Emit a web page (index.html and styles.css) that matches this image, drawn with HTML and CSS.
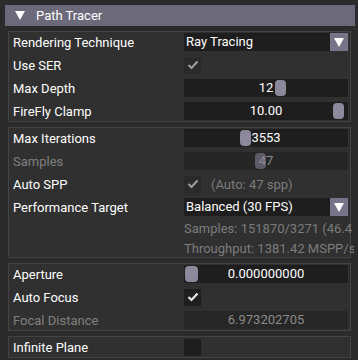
FILE: index.html
```html
<!DOCTYPE html>
<html>
<head>
<meta charset="utf-8">
<title>Path Tracer</title>
<link rel="stylesheet" href="styles.css">
</head>
<body>
<div class="panel">
    <div class="header">
        <svg class="header-arrow" width="10" height="9" viewBox="0 0 10 9"><polygon points="0,0 10,0 5,9" fill="#fff"/></svg>
        <span>Path Tracer</span>
    </div>

    <!-- 渲染设置 -->
    <div class="group">
        <div class="row">
            <span class="label">Rendering Technique</span>
            <div class="combo">
                <span class="combo-text">Ray Tracing</span>
                <span class="combo-btn"><svg width="10" height="9" viewBox="0 0 10 9"><polygon points="0,0 10,0 5,9" fill="#fff"/></svg></span>
            </div>
        </div>
        <div class="row">
            <span class="label">Use SER</span>
            <div class="ctrl"><span class="check check-soft"><svg width="12" height="10" viewBox="0 0 12 10"><polyline points="1.5,5 4.5,8 10.5,1.5" fill="none" stroke="currentColor" stroke-width="2.2"/></svg></span></div>
        </div>
        <div class="row">
            <span class="label">Max Depth</span>
            <div class="slider"><span class="grab" style="left: 91px"></span><span class="slider-val">12</span></div>
        </div>
        <div class="row">
            <span class="label">FireFly Clamp</span>
            <div class="slider"><span class="grab" style="left: 149px"></span><span class="slider-val">10.00</span></div>
        </div>
    </div>

    <!-- 采样设置 -->
    <div class="group">
        <div class="row">
            <span class="label">Max Iterations</span>
            <div class="slider"><span class="grab" style="left: 56px"></span><span class="slider-val">3553</span></div>
        </div>
        <div class="row">
            <span class="label disabled">Samples</span>
            <div class="slider slider-off"><span class="grab" style="left: 71px"></span><span class="slider-val">47</span></div>
        </div>
        <div class="row">
            <span class="label">Auto SPP</span>
            <div class="ctrl">
                <span class="check check-soft"><svg width="12" height="10" viewBox="0 0 12 10"><polyline points="1.5,5 4.5,8 10.5,1.5" fill="none" stroke="currentColor" stroke-width="2.2"/></svg></span>
                <span class="hint">(Auto: 47 spp)</span>
            </div>
        </div>
        <div class="row">
            <span class="label">Performance Target</span>
            <div class="combo">
                <span class="combo-text">Balanced (30 FPS)</span>
                <span class="combo-btn"><svg width="10" height="9" viewBox="0 0 10 9"><polygon points="0,0 10,0 5,9" fill="#fff"/></svg></span>
            </div>
        </div>
        <div class="row row-text">
            <span class="label"></span>
            <div class="info">Samples: 151870/3271 (46.4 spp)</div>
        </div>
        <div class="row row-text">
            <span class="label"></span>
            <div class="info">Throughput: 1381.42 MSPP/s</div>
        </div>
    </div>

    <!-- 景深 -->
    <div class="group">
        <div class="row">
            <span class="label">Aperture</span>
            <div class="slider"><span class="grab grab-wide" style="left: 1px"></span><span class="slider-val">0.000000000</span></div>
        </div>
        <div class="row">
            <span class="label">Auto Focus</span>
            <div class="ctrl"><span class="check"><svg width="12" height="10" viewBox="0 0 12 10"><polyline points="1.5,5 4.5,8 10.5,1.5" fill="none" stroke="currentColor" stroke-width="2.2"/></svg></span></div>
        </div>
        <div class="row">
            <span class="label disabled">Focal Distance</span>
            <div class="field field-off">6.973202705</div>
        </div>
    </div>

    <div class="group group-last">
        <div class="row">
            <span class="label">Infinite Plane</span>
            <div class="ctrl"><span class="check"></span></div>
        </div>
    </div>
</div>
</body>
</html>
```

FILE: styles.css
```css
/* 全局 */
body {
    margin: 0;
    background: #2b2b2b;
    color: #ffffff;
    font-family: Roboto, 'Noto Sans', sans-serif;
    font-size: 13px;
    overflow: hidden;
}

.panel {
    padding: 5px 3px 0 5px;
}

/* 折叠标题 */
.header {
    height: 21px;
    display: flex;
    align-items: center;
    background: #6b697a;
    padding-left: 10px;
    margin-bottom: 5px;
}

.header-arrow {
    margin-right: 11px;
}

/* 分组框 */
.group {
    margin: 0 4px 5px 3px;
    padding: 1px 2px 1px 4px;
    border: 1px solid #444444;
    background: #303030;
    display: flex;
    flex-direction: column;
    gap: 5px;
}

.group-last {
    margin-top: 1px;
}

.row {
    display: flex;
    align-items: center;
    height: 18px;
}

.row-text {
    height: 15px;
}

.label {
    width: 171px;
    flex: none;
    white-space: nowrap;
}

.disabled {
    color: #808080;
}

.ctrl {
    flex: 1;
    display: flex;
    align-items: center;
    height: 18px;
}

/* 下拉框 */
.combo {
    flex: 1;
    height: 18px;
    display: flex;
    background: #1e1e1e;
}

.combo-text {
    flex: 1;
    padding-left: 2px;
    line-height: 18px;
}

.combo-btn {
    width: 18px;
    height: 18px;
    background: #77748a;
    display: flex;
    align-items: center;
    justify-content: center;
}

/* 复选框 */
.check {
    width: 17px;
    height: 17px;
    background: #1e1e1e;
    color: #e6e6e6;
    display: flex;
    align-items: center;
    justify-content: center;
}

.check-soft {
    background: #2a2a2a;
    color: #9a9a9a;
}

.hint {
    color: #7c7c7c;
    margin-left: 10px;
}

/* 滑块 */
.slider {
    flex: 1;
    height: 18px;
    position: relative;
    background: #1e1e1e;
    text-align: center;
    line-height: 18px;
}

.grab {
    position: absolute;
    top: 1px;
    width: 11px;
    height: 16px;
    border-radius: 4px;
    background: #8c899d;
}

.grab-wide {
    width: 13px;
}

.slider-val {
    position: relative;
}

.slider-off {
    background: #262626;
    color: #8a8a8a;
}

.slider-off .grab {
    background: #5c5a68;
}

/* 只读字段 */
.field {
    flex: 1;
    height: 18px;
    line-height: 18px;
    text-align: center;
    background: #1e1e1e;
}

.field-off {
    background: #272727;
    color: #8a8a8a;
}

.info {
    flex: 1;
    color: #7c7c7c;
    white-space: nowrap;
    overflow: hidden;
    margin-right: -6px;
}
```
